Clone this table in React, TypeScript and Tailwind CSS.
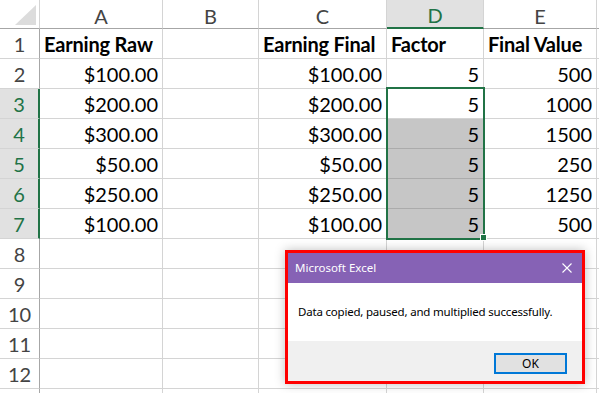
import React from "react";

const colsW = ["40px", "123px", "96px", "128px", "97px", "113px"];
const letters = ["A", "B", "C", "D", "E"];

const rows: string[][] = [
  ["Earning Raw", "", "Earning Final", "Factor", "Final Value"],
  ["$100.00", "", "$100.00", "5", "500"],
  ["$200.00", "", "$200.00", "5", "1000"],
  ["$300.00", "", "$300.00", "5", "1500"],
  ["$50.00", "", "$50.00", "5", "250"],
  ["$250.00", "", "$250.00", "5", "1250"],
  ["$100.00", "", "$100.00", "5", "500"],
];

const cellFont = { fontFamily: "Lato, 'Open Sans', sans-serif" };

export default function App() {
  const cells: React.ReactNode[] = [];
  cells.push(
    <div key="corner" className="relative border-r border-b border-r-[#d4d4d4] border-b-[#a6a6a6] bg-white">
      <svg className="absolute left-0 top-0" width="40" height="28">
        <polygon points="36,5 36,25 15,25" fill="#dcdcdc" />
      </svg>
    </div>
  );
  letters.forEach((l, i) => {
    const sel = i === 3;
    cells.push(
      <div
        key={"h" + l}
        className={
          sel
            ? "flex items-center justify-center border-r border-r-[#d4d4d4] border-b-2 border-b-[#217346] bg-[#e1e1e1] pt-[3px] text-[20px] text-[#217346]"
            : "flex items-center justify-center border-r border-r-[#d4d4d4] border-b border-b-[#a6a6a6] bg-white pt-[3px] text-[20px] text-[#444444]"
        }
        style={cellFont}
      >
        {l}
      </div>
    );
  });
  cells.push(<div key="hx" className="border-b border-b-[#a6a6a6] bg-white" />);

  for (let r = 1; r <= 13; r++) {
    const selRow = r >= 3 && r <= 7;
    cells.push(
      <div
        key={"r" + r}
        className={
          selRow
            ? "flex items-center justify-center border-r-2 border-r-[#217346] border-b border-b-[#d4d4d4] bg-[#e1e1e1] pt-[1px] text-[20px] text-[#217346]"
            : "flex items-center justify-center border-r border-r-[#a6a6a6] border-b border-b-[#d4d4d4] bg-white pt-[1px] text-[20px] text-[#444444]"
        }
        style={cellFont}
      >
        {r <= 12 ? r : ""}
      </div>
    );
    const data = rows[r - 1];
    for (let c = 0; c < 5; c++) {
      const v = data ? data[c] : "";
      const header = r === 1;
      const shaded = c === 3 && r >= 4 && r <= 7;
      cells.push(
        <div
          key={"c" + r + "-" + c}
          className={
            (shaded ? "bg-[#c6c6c6] border-b-[#ababab] " : "bg-white border-b-[#d4d4d4] ") +
            "flex items-center border-r border-r-[#d4d4d4] border-b pt-[1px] text-[20px] text-black whitespace-nowrap " +
            (header ? "justify-start pl-[4px] font-bold tracking-[-0.2px]" : "justify-end pr-[4px]")
          }
          style={cellFont}
        >
          {v}
        </div>
      );
    }
    cells.push(<div key={"x" + r} className="border-b border-b-[#d4d4d4] bg-white" />);
  }

  return (
    <div className="relative h-[393px] w-[599px] overflow-hidden bg-white">
      <div
        className="grid"
        style={{ gridTemplateColumns: colsW.join(" ") + " 1fr", gridTemplateRows: "29px repeat(13, 30px)" }}
      >
        {cells}
      </div>

      {/* selection box */}
      <div className="pointer-events-none absolute left-[386px] top-[87px] h-[153px] w-[99px] border-2 border-[#217346]" />
      <div className="absolute left-[480px] top-[234px] h-[7px] w-[7px] border border-white bg-[#217346]" />

      {/* dialog */}
      <div
        className="absolute left-[285px] top-[250px] flex h-[134px] w-[300px] flex-col border-[3px] border-[#ff0000] shadow-[0_0_10px_rgba(0,0,0,0.25)]"
        style={{ fontFamily: "'Noto Sans', 'Open Sans', sans-serif" }}
      >
        <div className="flex h-[30px] items-center justify-between bg-[#8662b5] pl-[7px] pr-[10px] text-[11.5px] text-white">
          <span>Microsoft Excel</span>
          <svg width="10" height="10" viewBox="0 0 10 10">
            <path d="M0.5 0.5 L9.5 9.5 M9.5 0.5 L0.5 9.5" stroke="white" strokeWidth="1.1" />
          </svg>
        </div>
        <div className="flex h-[58px] items-center bg-white pl-[10px] text-[11.5px] tracking-[-0.2px] text-black">
          Data copied, paused, and multiplied successfully.
        </div>
        <div className="flex flex-1 items-start justify-end bg-[#f0f0f0] pr-[15px] pt-[12px]">
          <div className="flex h-[21px] w-[73px] items-center justify-center border-2 border-[#0078d7] bg-[#e1e1e1] text-[12px] text-black">
            OK
          </div>
        </div>
      </div>
    </div>
  );
}
